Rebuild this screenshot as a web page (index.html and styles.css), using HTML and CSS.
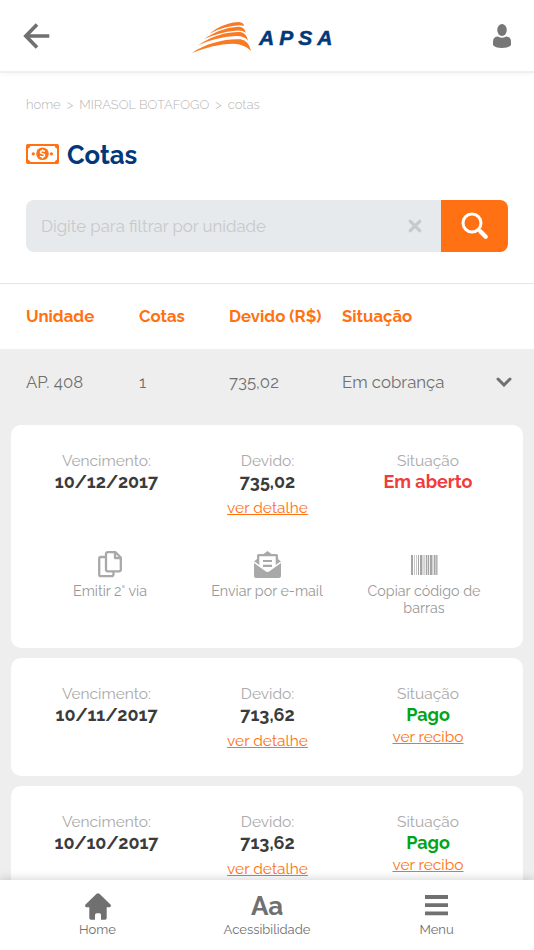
FILE: index.html
```html
<!DOCTYPE html>
<html lang="pt-br">
<head>
  <meta charset="utf-8">
  <title>APSA - Cotas</title>
  <meta name="viewport" content="width=device-width, initial-scale=1">
  <link rel="stylesheet" href="styles.css">
</head>
<body>
  <header class="topo">
    <a class="voltar"><svg width="27" height="26" viewBox="0 0 27 26"><path d="M14 1.5L2.8 13L14 24.5M3.3 13H26.3" fill="none" stroke="#707070" stroke-width="3.6"/></svg></a>
    <div class="logo">
      <svg width="63" height="35" viewBox="570 60 189 105" fill="#f97a25">
        <path d="M628 101C658 78 690 66 717 66Q731 68 732 78Q722 74 705 77C675 80 650 90 628 101Z"/>
        <path d="M612 117C650 91 690 80 719 80Q735 83 737 98Q727 90 706 92C673 95 642 104 612 117Z"/>
        <path d="M594 136C640 105 685 95 721 96Q740 100 744 122Q734 107 706 108C665 110 630 121 594 136Z"/>
        <path d="M575 159C620 128 680 115 722 118Q747 123 753 153Q735 133 703 131C655 131 615 144 575 159Z"/>
      </svg>
      <span>APSA</span>
    </div>
    <a class="usuario"><svg width="18" height="24" viewBox="0 0 18 24" fill="#777"><ellipse cx="9" cy="6" rx="4.8" ry="6"/><path d="M0 21V18Q0 12.5 5 12.5Q9 15 13 12.5Q18 12.5 18 18V21Q16 24 9 24Q2 24 0 21Z"/></svg></a>
  </header>

  <nav class="caminho">
    <span>home</span><i>&gt;</i><span>MIRASOL BOTAFOGO</span><i>&gt;</i><span>cotas</span>
  </nav>

  <h1 class="titulo">
    <svg width="33" height="20" viewBox="0 0 33 20"><rect x="1" y="1" width="31" height="18" rx=".7" fill="#fff" stroke="#ff7112" stroke-width="2"/><path d="M1 1H5Q4 4 1 5ZM32 1H28Q29 4 32 5ZM1 19H5Q4 16 1 15ZM32 19H28Q29 16 32 15Z" fill="#ff7112"/><circle cx="16.5" cy="9.8" r="6.3" fill="#ff7112"/><circle cx="7.3" cy="9.8" r="1.6" fill="#ff7112"/><circle cx="25.4" cy="9.8" r="1.6" fill="#ff7112"/><path d="M18.9 7.4Q18 6.7 16.5 6.7C13.7 6.7 13.7 9.4 16.2 9.7C19.5 10.1 19.3 12.8 16.5 12.8Q14.8 12.8 14 12M16.5 5.3V6.7M16.5 12.8V14.4" fill="none" stroke="#fff" stroke-width="1.4"/></svg>
    <span>Cotas</span>
  </h1>

  <form class="busca">
    <div class="campo"><span>Digite para filtrar por unidade</span>
      <svg width="14" height="14" viewBox="0 0 14 14"><path d="M2.3 2.3L11.7 11.7M11.7 2.3L2.3 11.7" stroke="#c7c9ca" stroke-width="3.3" stroke-linecap="round"/></svg>
    </div>
    <button type="button"><svg width="28" height="28" viewBox="0 0 28 28" fill="none" stroke="#fff" stroke-linecap="round"><circle cx="11" cy="11" r="9" stroke-width="3"/><path d="M17.5 17.5L20 20" stroke-width="3"/><path d="M19.5 19.5L24.7 24.7" stroke-width="4.4"/></svg></button>
  </form>

  <div class="linha cabecalho">
    <span>Unidade</span><span>Cotas</span><span>Devido (R$)</span><span>Situação</span>
  </div>

  <main>
    <div class="linha unidade">
      <span>AP. 408</span><span>1</span><span>735,02</span><span>Em cobrança</span>
      <svg width="16" height="10" viewBox="0 0 16 10"><path d="M2 2L8 8L14 2" fill="none" stroke="#707070" stroke-width="3" stroke-linecap="round"/></svg>
    </div>

    <section class="cota aberta">
      <div class="dados">
        <div><p>Vencimento:</p><strong>10/12/2017</strong></div>
        <div><p>Devido:</p><strong>735,02</strong><a>ver detalhe</a></div>
        <div><p>Situação</p><strong class="vermelho">Em aberto</strong></div>
      </div>
      <div class="acoes">
        <div>
          <svg width="24" height="27" viewBox="0 0 24 27" fill="none" stroke="#a9a9a9" stroke-width="2.3" stroke-linejoin="round"><path d="M7 6H3Q1.2 6 1.2 8V23.5Q1.2 25.2 3 25.2H13.5Q15.5 25.2 15.5 23V20.5"/><path d="M10 1.2H17.5L22.8 6.5V18.5Q22.8 20.3 21 20.3H10Q8 20.3 8 18.5V3Q8 1.2 10 1.2Z"/><path d="M17 2V7H22"/></svg>
          <span>Emitir 2° via</span>
        </div>
        <div>
          <svg width="27" height="27" viewBox="0 0 27 27"><path d="M0 10.5L3 8V4.5Q3 3 4.5 3H9.5L13.5 0L17.5 3H22.5Q24 3 24 4.5V8L27 10.5L22 15H5Z" fill="#a9a9a9"/><path d="M5.3 5.3H21.7V14.5L13.5 20.5L5.3 14.5Z" fill="#fff"/><path d="M9 10H18M9 14.8H18" stroke="#a9a9a9" stroke-width="2.2"/><path d="M0 11.2L13.5 20.3L27 11.2V25Q27 27 25 27H2Q0 27 0 25Z" fill="#a9a9a9"/><path d="M0 11.2L12 19.6Q13.5 20.7 15 19.6L27 11.2" fill="none" stroke="#fff" stroke-width="1.5"/></svg>
          <span>Enviar por e-mail</span>
        </div>
        <div>
          <svg class="barras" width="27" height="20" viewBox="0 0 27 20"><path d="M0 0h2v20H0zM3 0h.6v20H3zM5 0h.6v20H5zM7 0h1v20H7zM9 0h2v20H9zM11.6 0h.8v20h-.8zM13.5 0h.7v20h-.7zM15 0h1.4v20H15zM17 0h1.2v20H17zM19 0h2v20h-2zM21.5 0h.8v20h-.8zM23 0h1.6v20H23zM25.2 0h1.3v20h-1.3z" fill="#a5a5a5"/></svg>
          <span>Copiar código de barras</span>
        </div>
      </div>
    </section>

    <section class="cota">
      <div class="dados">
        <div><p>Vencimento:</p><strong>10/11/2017</strong></div>
        <div><p>Devido:</p><strong>713,62</strong><a>ver detalhe</a></div>
        <div><p>Situação</p><strong class="verde">Pago</strong><a class="recibo">ver recibo</a></div>
      </div>
    </section>

    <section class="cota">
      <div class="dados">
        <div><p>Vencimento:</p><strong>10/10/2017</strong></div>
        <div><p>Devido:</p><strong>713,62</strong><a>ver detalhe</a></div>
        <div><p>Situação</p><strong class="verde">Pago</strong><a class="recibo">ver recibo</a></div>
      </div>
    </section>
  </main>

  <footer class="rodape">
    <a><svg width="26" height="27" viewBox="0 0 26 27"><path d="M11.6 .8Q13 -.4 14.4 .8L25.5 11.5Q26.5 13 25 14.3H21.7V25Q21.7 26.8 20 26.8H16V22Q16 20.3 14.5 20.3H11.8Q10 20.3 10 22V26.8H6Q4.3 26.8 4.3 25V14.3H1Q-.5 13 .5 11.5Z" fill="#707070"/></svg><span>Home</span></a>
    <a><b>Aa</b><span>Acessibilidade</span></a>
    <a><svg width="23" height="27" viewBox="0 0 23 27"><path d="M0 4H23M0 12.2H23M0 20.4H23" stroke="#707070" stroke-width="3.8"/></svg><span>Menu</span></a>
  </footer>
</body>
</html>
```
FILE: styles.css
```css
* {
  box-sizing: border-box;
}

body {
  margin: 0;
  height: 950px;
  overflow: hidden;
  background: #fff;
  color: #707070;
  font-family: Raleway, Lato, sans-serif;
  display: flex;
  flex-direction: column;
}

svg {
  display: block;
  flex: none;
}

/* topo */
.topo {
  height: 73px;
  flex: none;
  padding: 0 23px;
  display: grid;
  grid-template-columns: 167px 1fr 18px;
  border-bottom: 2px solid #efefef;
  box-shadow: 0 2px 4px rgba(0, 0, 0, .03);
}

.voltar {
  padding-top: 23px;
}

.usuario {
  padding-top: 24px;
}

.logo {
  display: flex;
  padding-top: 20px;
}

.logo span {
  margin: 5px 0 0 6px;
  font: italic bold 21px/26px "Liberation Sans", Arial, sans-serif;
  letter-spacing: 5px;
  color: #00387a;
  -webkit-text-stroke: .5px #00387a;
}

/* caminho e titulo */
.caminho {
  display: flex;
  height: 18px;
  flex: none;
  margin: 23px 26px 0;
  font-size: 13px;
  line-height: 18px;
  font-weight: 300;
  color: #b5b5b5;
}

.caminho i {
  font-style: normal;
  margin: 0 6px;
}

.titulo {
  display: flex;
  align-items: center;
  gap: 8px;
  height: 40px;
  flex: none;
  margin: 21px 26px 0;
  font-size: 25.7px;
  color: #00387a;
}

.titulo svg {
  margin-top: -3px;
}

/* busca */
.busca {
  display: flex;
  height: 52px;
  flex: none;
  margin: 25px 26px 31px;
  border-radius: 8px;
  overflow: hidden;
}

.campo {
  flex: 1;
  display: flex;
  align-items: center;
  justify-content: space-between;
  padding: 0 19px 0 15px;
  background: #e6eaec;
  color: #c7c9ca;
  font-size: 16.8px;
}

.busca button {
  width: 67px;
  border: 0;
  padding: 0 0 0 20px;
  background: #ff7112;
}

/* tabela */
.linha {
  display: grid;
  grid-template-columns: 113px 90px 113px 1fr 16px;
  align-items: center;
  height: 66px;
  flex: none;
  padding: 0 22px 0 26px;
  font-size: 16.8px;
}

.cabecalho {
  border-top: 1px solid #e6e6e6;
  padding-bottom: 2px;
  color: #ff7112;
  font-weight: bold;
}

main {
  flex: 1;
  min-height: 0;
  background: #eee;
  overflow: hidden;
}

.unidade {
  height: 76px;
  padding-bottom: 11px;
}

.unidade svg {
  margin-top: 1px;
}

.cota {
  height: 118px;
  margin: 0 11px 10px;
  padding-top: 25px;
  border-radius: 10px;
  background: #fff;
}

.aberta {
  height: 223px;
}

.dados {
  display: grid;
  grid-template-columns: 161px 161px 160px;
  justify-content: center;
  text-align: center;
}

.dados > div {
  display: flex;
  flex-direction: column;
  align-items: center;
}

.dados p {
  margin: 0;
  font-size: 15.5px;
  line-height: 21px;
  color: #aaa;
}

.dados strong {
  font-size: 18px;
  line-height: 21px;
  color: #3b3b3b;
}

.dados a {
  margin-top: 5px;
  font-size: 15.5px;
  line-height: 21px;
  color: #ff7112;
  text-decoration: underline;
}

.dados .recibo {
  margin-top: 1px;
}

.dados .vermelho {
  color: #f03c3c;
}

.dados .verde {
  color: #00a518;
}

.acoes {
  display: flex;
  justify-content: center;
  margin-top: 33px;
}

.acoes > div {
  display: flex;
  flex-direction: column;
  align-items: center;
  width: 157px;
  text-align: center;
  font-size: 14.3px;
  line-height: 17px;
  color: #999;
}

.acoes span {
  margin-top: 5px;
  max-width: 130px;
}

.acoes .barras {
  margin: 4px 0 3px;
}

/* rodape */
.rodape {
  position: relative;
  display: flex;
  justify-content: space-between;
  height: 70px;
  flex: none;
  padding: 13px 13px 0;
  background: #fff;
  box-shadow: 0 -2px 8px rgba(0, 0, 0, .15);
}

.rodape a {
  width: 169px;
  display: flex;
  flex-direction: column;
  align-items: center;
  font-size: 13px;
}

.rodape b {
  height: 27px;
  font-size: 26px;
  line-height: 27px;
}

.rodape span {
  margin-top: 2px;
  line-height: 16px;
}
```
